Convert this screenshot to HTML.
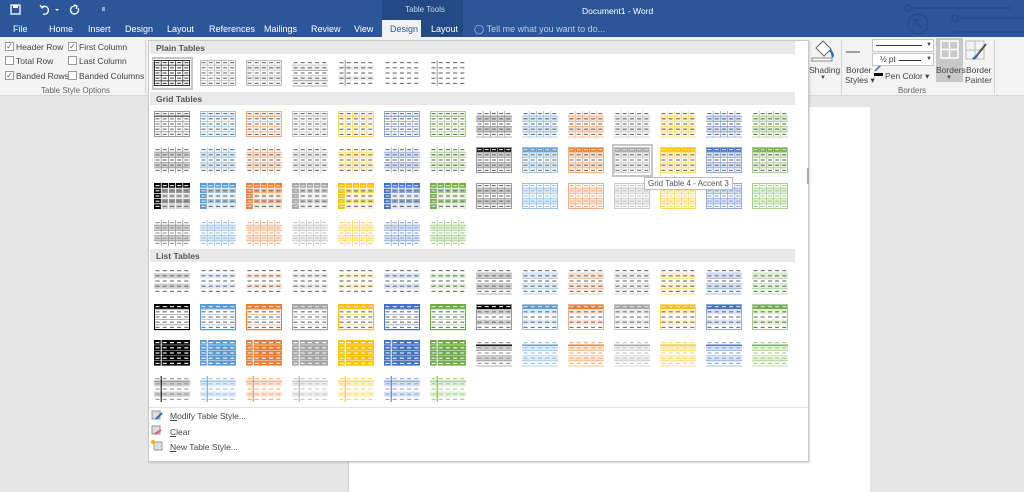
<!DOCTYPE html>
<html><head><meta charset="utf-8"><style>
*{margin:0;padding:0;box-sizing:border-box}
body{width:1024px;height:492px;overflow:hidden;position:relative;background:#e6e6e6;font-family:"Liberation Sans",sans-serif;font-size:8.5px;color:#444}
.a{position:absolute;white-space:nowrap}
.tab{position:absolute;top:24px;color:#fff;font-size:9px}
.cb{position:absolute;width:9px;height:9px;border:1px solid #999;background:#fff;font-size:8px;line-height:7px;text-align:center;color:#555}
.hd{position:absolute;left:150px;width:645px;height:13px;background:#e9e9e9;font-weight:bold;font-size:8.5px;color:#555;padding:2px 0 0 6px}
u{text-decoration:underline}
</style></head><body>
<div class="a" style="left:0;top:0;width:1024px;height:37px;background:#2b579a"></div>
<div class="a" style="left:382px;top:0;width:81px;height:37px;background:#234a84"></div>
<div class="a" style="left:382px;top:20px;width:39px;height:17px;background:#f3f3f3"></div>
<div class="a" style="left:405px;top:5px;color:#c6d3e8;font-size:8px">Table Tools</div>
<div class="a" style="left:582px;top:6px;color:#fff;font-size:8.5px">Document1 - Word</div>
<svg class="a" style="left:0;top:0" width="1024" height="37">
<rect x="11" y="5" width="9" height="9" fill="none" stroke="#fff" stroke-width="1.3"/><rect x="13" y="5" width="5" height="3" fill="#fff"/>
<path d="M42 7 a4 4 0 1 1 1 7" fill="none" stroke="#fff" stroke-width="1.3"/><path d="M40 5 l2 3 l3 -2" fill="none" stroke="#fff" stroke-width="1.2"/>
<path d="M55 9 l2 2 l2 -2" fill="#fff"/>
<path d="M78 8 a4 4 0 1 1 -3 -2" fill="none" stroke="#fff" stroke-width="1.3"/><path d="M74 5 l3 1 l-1 3" fill="none" stroke="#fff" stroke-width="1.2"/>
<path d="M102 8 h3 M102 10 h3" stroke="#fff"/>
<g fill="none" stroke="#244f8e" stroke-width="2"><circle cx="918" cy="24" r="10"/><path d="M914 20 l8 8 M914 20 h5 M914 20 v5"/><path d="M912 8 h100 M960 18 h64 M955 32 h69"/><circle cx="908" cy="8" r="3"/><circle cx="955" cy="18" r="3"/></g>
</svg>
<div class="tab" style="left:13px">File</div>
<div class="tab" style="left:49px">Home</div>
<div class="tab" style="left:88px">Insert</div>
<div class="tab" style="left:125px">Design</div>
<div class="tab" style="left:167px">Layout</div>
<div class="tab" style="left:209px">References</div>
<div class="tab" style="left:264px">Mailings</div>
<div class="tab" style="left:311px">Review</div>
<div class="tab" style="left:354px">View</div>
<div class="tab" style="left:390px;color:#2b579a">Design</div>
<div class="tab" style="left:431px">Layout</div>
<div class="tab" style="left:474px;color:#b9c9e3">&#9711;&nbsp;Tell me what you want to do...</div>
<div class="a" style="left:0;top:37px;width:1024px;height:59px;background:#f3f3f3;border-bottom:1px solid #d6d6d6"></div>
<div class="a" style="left:145px;top:40px;width:1px;height:54px;background:#d4d4d4"></div>
<div class="cb" style="left:5px;top:42px">&#10003;</div><div class="a" style="left:16px;top:42px">Header Row</div>
<div class="cb" style="left:68px;top:42px">&#10003;</div><div class="a" style="left:79px;top:42px">First Column</div>
<div class="cb" style="left:5px;top:56px"></div><div class="a" style="left:16px;top:56px">Total Row</div>
<div class="cb" style="left:68px;top:56px"></div><div class="a" style="left:79px;top:56px">Last Column</div>
<div class="cb" style="left:5px;top:71px">&#10003;</div><div class="a" style="left:16px;top:71px">Banded Rows</div>
<div class="cb" style="left:68px;top:71px"></div><div class="a" style="left:79px;top:71px">Banded Columns</div>
<div class="a" style="left:41px;top:86px;font-size:8px;color:#666">Table Style Options</div>
<svg class="a" style="left:808px;top:38px" width="200" height="56">
<path d="M8 10 l7 -7 l8 8 l-7 7 z" fill="#fff" stroke="#666"/><path d="M22 12 q4 5 2 7" stroke="#2b6cc4" stroke-width="2.5" fill="none"/><rect x="4" y="20" width="20" height="3" fill="#fff" stroke="#888"/>
<path d="M38 14 h14" stroke="#444"/>
<rect x="128" y="0" width="27" height="44" fill="#c8c8c8"/>
<g stroke="#fff" stroke-width="1.5" fill="none"><rect x="133" y="3" width="17" height="17"/><path d="M141.5 3 v17 M133 11.5 h17"/></g>
<g stroke="#bbb" fill="none"><rect x="158" y="3" width="18" height="18"/><path d="M167 3 v18 M158 12 h18"/></g><path d="M178 6 l-8 10 l-3 4" stroke="#555" stroke-width="2"/><path d="M165 21 l4 -3" stroke="#2b6cc4" stroke-width="2.5"/>
<rect x="66" y="35" width="9" height="3" fill="#000"/><path d="M67 33 l7 -7" stroke="#2b6cc4" stroke-width="1.5"/>
</svg>
<div class="a" style="left:872px;top:39px;width:62px;height:13px;background:#fff;border:1px solid #c6c6c6"></div>
<div class="a" style="left:876px;top:45px;width:46px;height:1px;background:#333"></div>
<div class="a" style="left:926px;top:42px;font-size:6px">&#9660;</div>
<div class="a" style="left:872px;top:53px;width:62px;height:13px;background:#fff;border:1px solid #c6c6c6"></div>
<div class="a" style="left:880px;top:55px;font-size:8px;color:#333">½ pt</div>
<div class="a" style="left:899px;top:60px;width:22px;height:1px;background:#333"></div>
<div class="a" style="left:926px;top:56px;font-size:6px">&#9660;</div>
<div class="a" style="left:809px;top:65px">Shading</div><div class="a" style="left:820px;top:75px;font-size:6px">&#9660;</div>
<div class="a" style="left:846px;top:65px">Border</div><div class="a" style="left:845px;top:75px">Styles ▾</div>
<div class="a" style="left:885px;top:71px">Pen Color ▾</div>
<div class="a" style="left:936px;top:65px">Borders</div><div class="a" style="left:946px;top:75px;font-size:6px">&#9660;</div>
<div class="a" style="left:966px;top:65px">Border</div><div class="a" style="left:965px;top:75px">Painter</div>
<div class="a" style="left:898px;top:86px;font-size:8px;color:#666">Borders</div>
<div class="a" style="left:841px;top:40px;width:1px;height:54px;background:#d4d4d4"></div>
<div class="a" style="left:994px;top:40px;width:1px;height:54px;background:#d4d4d4"></div>
<div class="a" style="left:348px;top:107px;width:522px;height:385px;background:#fff;border-left:1px solid #d0d0d0"></div>
<div class="a" style="left:148px;top:40px;width:661px;height:422px;background:#fff;border:1px solid #c8c8c8;box-shadow:1px 1px 2px rgba(0,0,0,.15)"></div>
<div class="a" style="left:807px;top:168px;width:2px;height:16px;background:#aaa"></div>
<div class="hd" style="top:41px">Plain Tables</div>
<div class="hd" style="top:92px">Grid Tables</div>
<div class="hd" style="top:249px">List Tables</div>
<div class="a" style="left:149px;top:407px;width:659px;height:1px;background:#e2e2e2"></div>
<svg class="a" style="left:0;top:0" width="1024" height="492" id="g"></svg>
<svg class="a" style="left:150px;top:409px" width="14" height="46">
<rect x="2" y="2" width="8" height="8" fill="#ddd" stroke="#999"/><path d="M6 10 l6 -6" stroke="#2b6cc4" stroke-width="2"/>
<rect x="2" y="17" width="8" height="8" fill="#ddd" stroke="#999"/><path d="M5 25 l6 -4" stroke="#e05a7a" stroke-width="2"/>
<rect x="4" y="33" width="8" height="8" fill="#ddd" stroke="#999"/><circle cx="3" cy="33" r="2" fill="#f0b400"/>
</svg>
<div class="a" style="left:170px;top:411px;font-size:8.5px"><u>M</u>odify Table Style...</div>
<div class="a" style="left:170px;top:427px;font-size:8.5px"><u>C</u>lear</div>
<div class="a" style="left:170px;top:442px;font-size:8.5px"><u>N</u>ew Table Style...</div>
<div class="a" style="left:612px;top:144px;width:41px;height:33px;border:2px solid #c6c6c6"></div>
<div class="a" style="left:152px;top:57px;width:41px;height:33px;border:2px solid #c6c6c6"></div>
<div class="a" style="left:644px;top:177px;padding:1px 3px;background:#fff;border:1px solid #bbb;color:#555;font-size:8px">Grid Table 4 - Accent 3</div>
<script>
var A=['#000000','#5b9bd5','#ed7d31','#a5a5a5','#ffc000','#4472c4','#70ad47'],
L=['#cfcfcf','#deebf7','#fbe4d5','#ededed','#fff2cc','#d9e2f3','#e2efd9'],
M=['#999999','#9cc3e5','#f4b083','#c9c9c9','#ffd966','#8eaadb','#a8d08d'];
var s='';
function th(x,y,o){var w=36,h=26,rh=5.2,cw=7.2;
 for(var r=0;r<5;r++){var f=null;if(r==0&&o.hdr)f=o.hdr;else if(r%2==1&&o.band)f=o.band;else if(o.body)f=o.body;
  if(f)s+='<rect x="'+x+'" y="'+(y+r*rh)+'" width="'+w+'" height="'+rh+'" fill="'+f+'"/>';
  if(o.fc&&r>0)s+='<rect x="'+x+'" y="'+(y+r*rh)+'" width="'+cw+'" height="'+rh+'" fill="'+o.fc+'"/>';
  for(var c=0;c<5;c++){var dc=o.dash||'#777';if(r==0&&o.hdr)dc=o.hd||'#fff';if(c==0&&o.fc&&r>0)dc=o.hd||'#fff';
   s+='<rect x="'+(x+c*cw+1.5)+'" y="'+(y+r*rh+2)+'" width="4" height="1.2" fill="'+dc+'"/>';}
  if(o.hl)s+='<path d="M'+x+' '+(y+r*rh+rh)+'h'+w+'" stroke="'+o.hl+'" stroke-width=".8"/>';}
 if(o.grid){for(var c=1;c<5;c++)s+='<path d="M'+(x+c*cw)+' '+y+'v'+h+'" stroke="'+o.grid+'" stroke-width=".8"/>';
  for(var r=1;r<5;r++)s+='<path d="M'+x+' '+(y+r*rh)+'h'+w+'" stroke="'+o.grid+'" stroke-width=".8"/>';}
 if(o.bd)s+='<rect x="'+(x+.5)+'" y="'+(y+.5)+'" width="'+(w-1)+'" height="'+(h-1)+'" fill="none" stroke="'+o.bd+'"/>';
 if(o.top)s+='<path d="M'+x+' '+(y+rh)+'h'+w+'" stroke="'+o.top+'" stroke-width="1.3"/>';
 if(o.vl)s+='<path d="M'+(x+cw)+' '+y+'v'+h+'" stroke="'+o.vl+'" stroke-width="1"/>';}
var X=function(i){return 154+i*46};
th(X(0),60,{grid:'#333',bd:'#333',dash:'#555'});
th(X(1),60,{grid:'#bbb',bd:'#bbb'});th(X(2),60,{grid:'#ccc',bd:'#bbb',band:'#eee'});
th(X(3),60,{hl:'#999',band:'#eee'});th(X(4),60,{band:'#eee',vl:'#999'});th(X(5),60,{});th(X(6),60,{vl:'#999'});
for(var i=0;i<7;i++){
 th(X(i),111,{grid:M[i],bd:M[i],top:A[i]=='#000000'?'#555':M[i]});
 th(X(i+7),111,{band:L[i],hl:M[i],grid:M[i]});
 th(X(i),147,{band:L[i],grid:M[i]});
 th(X(i+7),147,{hdr:A[i],band:L[i],grid:M[i],bd:M[i],hd:'#ddd'});
 th(X(i),183,{hdr:A[i],fc:A[i],body:L[i],band:M[i],grid:'#fff',hd:'#ddd'});
 th(X(i+7),183,{band:L[i],grid:M[i],bd:M[i],dash:i==0?'#777':M[i]});
 th(X(i),220,{band:L[i],grid:M[i],dash:M[i]});
 th(X(i),268,{band:L[i]});
 th(X(i+7),268,{band:L[i],hl:M[i]});
 th(X(i),304,{hdr:A[i],bd:A[i],hl:M[i],hd:'#ddd'});
 th(X(i+7),304,{hdr:A[i],band:L[i],bd:M[i],hd:'#ddd'});
 th(X(i),340,{body:A[i],hdr:A[i],hl:'#fff',vl:'#fff',dash:'#eee',hd:'#fff'});
 th(X(i+7),340,{band:L[i],top:A[i],hl:M[i],dash:M[i]});
 th(X(i),376,{band:L[i],top:M[i],vl:A[i],dash:M[i]});
}
document.getElementById('g').innerHTML=s;
</script>
</body></html>
